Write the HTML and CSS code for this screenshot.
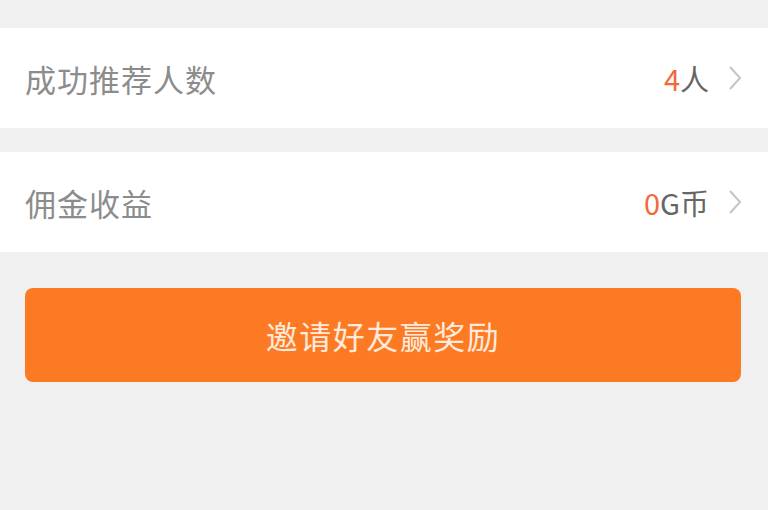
FILE: index.html
```html
<!DOCTYPE html>
<html lang="zh-CN">
<head>
<meta charset="utf-8">
<title>推荐</title>
<link rel="stylesheet" href="styles.css">
</head>
<body>
<div class="page">
  <div class="list">
    <div class="row">
      <span class="label">成功推荐人数</span>
      <span class="value"><em class="num">4</em>人<svg class="chev" viewBox="0 0 14 26" width="14" height="26"><polyline points="2,2 12,13 2,24" fill="none" stroke="#c4c4c4" stroke-width="2"/></svg></span>
    </div>
    <div class="row">
      <span class="label">佣金收益</span>
      <span class="value"><em class="num">0</em>G币<svg class="chev" viewBox="0 0 14 26" width="14" height="26"><polyline points="2,2 12,13 2,24" fill="none" stroke="#c4c4c4" stroke-width="2"/></svg></span>
    </div>
  </div>
  <button class="invite">邀请好友赢奖励</button>
</div>
</body>
</html>
```
FILE: styles.css
```css
html, body {
  margin: 0;
  padding: 0;
  background: #f0f0f0;
  font-family: "Noto Sans CJK SC", "Noto Sans", sans-serif;
}
.page {
  padding-top: 28px;
  display: flex;
  flex-direction: column;
}
.list {
  display: flex;
  flex-direction: column;
  gap: 24px;
}
.row {
  height: 100px;
  background: #ffffff;
  display: flex;
  align-items: center;
  justify-content: space-between;
  padding: 0 26px 0 25px;
}
.label {
  font-size: 31px;
  color: #8c8c8c;
  letter-spacing: 1px;
}
.value {
  display: flex;
  align-items: center;
  font-size: 29px;
  color: #666666;
}
.num {
  font-style: normal;
  color: #f26a3c;
}
.chev {
  margin-left: 19px;
}
.invite {
  margin: 36px 27px 0 25px;
  height: 94px;
  border: none;
  border-radius: 8px;
  background: #fd7a24;
  color: #ffeadb;
  font-family: "Noto Sans CJK SC", "Noto Sans", sans-serif;
  font-size: 32px;
  letter-spacing: 1.5px;
}
```
